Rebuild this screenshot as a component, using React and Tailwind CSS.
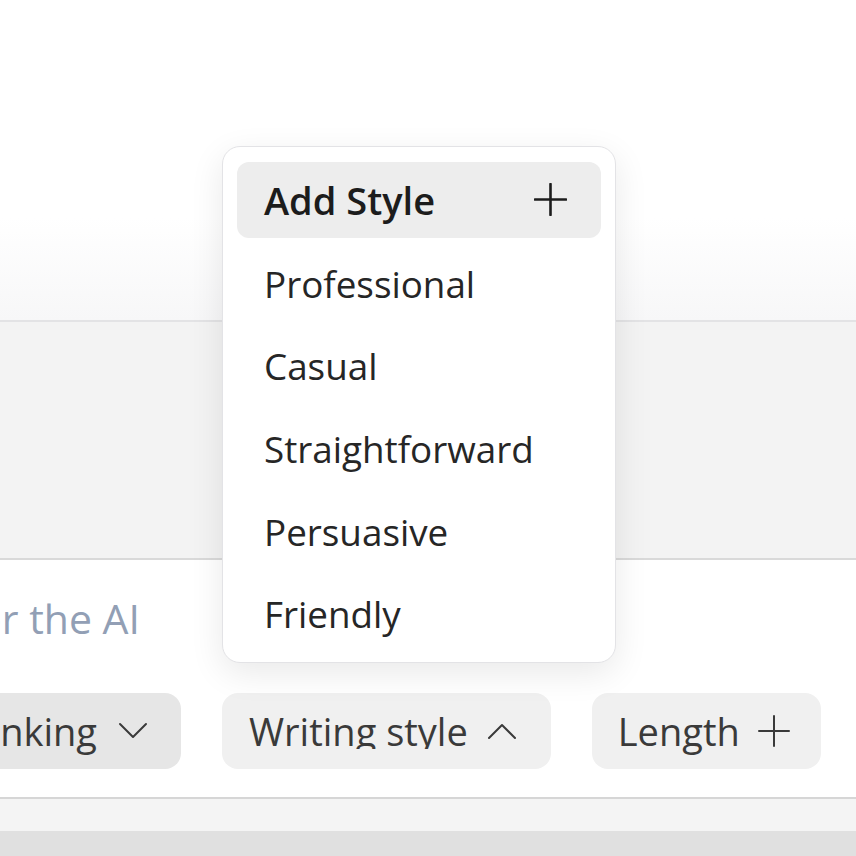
import React from "react";

function Plus({ size = 32, stroke = 2, color = "#3a3a3a" }) {
  return (
    <svg width={size} height={size} viewBox={`0 0 ${size} ${size}`} fill="none">
      <line x1={size / 2} y1="1" x2={size / 2} y2={size - 1} stroke={color} strokeWidth={stroke} strokeLinecap="round" />
      <line x1="1" y1={size / 2} x2={size - 1} y2={size / 2} stroke={color} strokeWidth={stroke} strokeLinecap="round" />
    </svg>
  );
}

function Chevron({ up = false, color = "#3a3a3a" }) {
  return (
    <svg width="30" height="18" viewBox="0 0 30 18" fill="none">
      <polyline
        points={up ? "2,16 15,3 28,16" : "2,2 15,15 28,2"}
        stroke={color}
        strokeWidth="2"
        strokeLinecap="round"
        strokeLinejoin="round"
        fill="none"
      />
    </svg>
  );
}

export default function App() {
  const items = ["Professional", "Casual", "Straightforward", "Persuasive", "Friendly"];
  return (
    <div className="relative w-[856px] h-[856px] overflow-hidden bg-white font-['Open_Sans',sans-serif]">
      <div className="h-[320px] bg-[linear-gradient(to_bottom,#ffffff_68%,#f7f7f8_100%)]" />
      <div className="h-[2px] bg-[#e3e3e5]" />
      <div className="h-[236px] bg-[#f3f3f3]" />
      <div className="h-[2px] bg-[#d9d9d9]" />
      <div className="h-[237px] bg-white flex flex-col">
        <div className="pt-[30px] h-[86px]">
          <div className="w-[140px] flex justify-end overflow-hidden whitespace-nowrap">
            <span className="shrink-0 text-[41px] leading-[56px] text-[#929fb5]">
              Describe your style or give instructions for the AI
            </span>
          </div>
        </div>
        <div className="mt-[47px] flex items-center gap-[41px] h-[76px]">
          <div className="w-[181px] h-[76px] flex justify-end overflow-hidden shrink-0">
            <div className="shrink-0 h-[76px] rounded-[16px] bg-[#e6e6e6] flex items-center pl-[27px] pr-[33px] gap-[21px]">
              <span className="text-[38px] leading-[50px] text-[#3a3a3a] whitespace-nowrap">Thinking</span>
              <Chevron />
            </div>
          </div>
          <div className="shrink-0 h-[76px] rounded-[16px] bg-[#f0f0f0] flex items-center pl-[27px] pr-[34px] gap-[19px]">
            <span className="block h-[50px]">
              <span className="block h-[43px] overflow-hidden">
                <span className="block text-[38px] leading-[50px] text-[#3a3a3a] whitespace-nowrap">Writing style</span>
              </span>
            </span>
            <Chevron up />
          </div>
          <div className="shrink-0 h-[76px] rounded-[16px] bg-[#f0f0f0] flex items-center pl-[26px] pr-[31px] gap-[18px]">
            <span className="text-[38px] leading-[50px] text-[#3a3a3a] whitespace-nowrap">Length</span>
            <Plus size={32} stroke={2} color="#3a3a3a" />
          </div>
        </div>
      </div>
      <div className="h-[2px] bg-[#d6d6d6]" />
      <div className="h-[32px] bg-[#f4f4f4]" />
      <div className="h-[25px] bg-[#e0e0e0]" />

      <div className="absolute left-[222px] top-[146px] w-[394px] rounded-[18px] border-[1.5px] border-[#e3e3e6] bg-white pt-[14.5px] pb-[7px] px-[14px] shadow-[0_10px_34px_rgba(0,0,0,0.09)]">
        <div className="h-[76px] rounded-[12px] bg-[#ededed] flex items-center justify-between pl-[27px] pr-[34px]">
          <span className="text-[38px] leading-[50px] font-semibold text-[#1c1c1c]">Add Style</span>
          <Plus size={33} stroke={2.6} color="#1c1c1c" />
        </div>
        <div className="mt-[5px] flex flex-col">
          {items.map((t) => (
            <div key={t} className="h-[82.6px] flex items-center pl-[27px]">
              <span className="text-[36.8px] leading-[50px] text-[#262626]">{t}</span>
            </div>
          ))}
        </div>
      </div>
    </div>
  );
}
